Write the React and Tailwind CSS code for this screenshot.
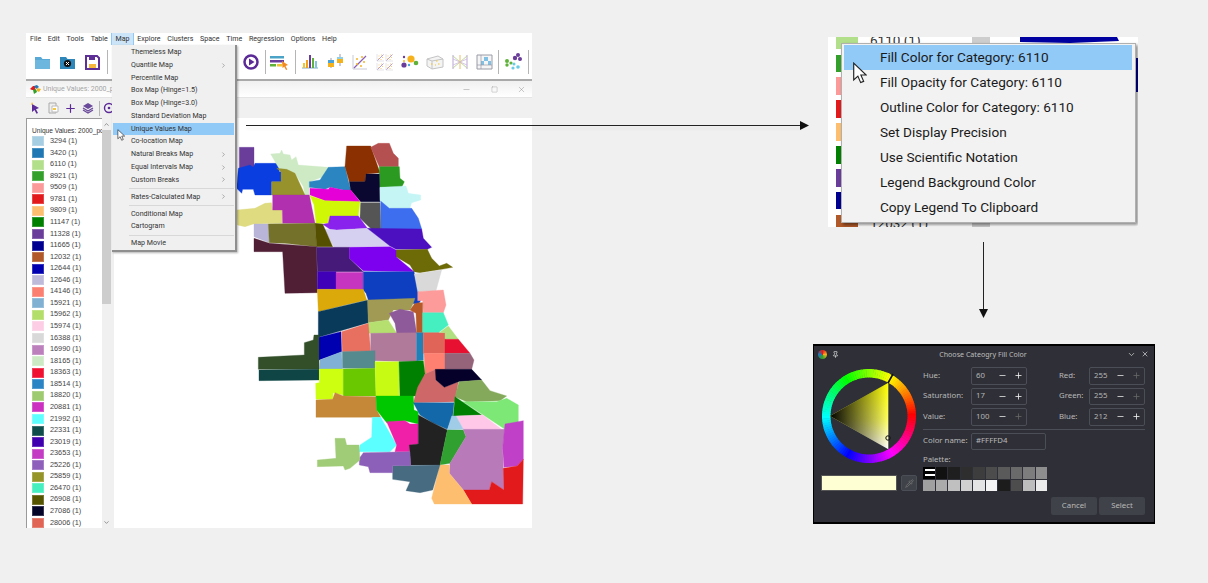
import React from "react";
import { Minus, Plus, Square, X, ChevronDown, ChevronUp, ChevronRight, Pipette, Pin } from "lucide-react";

const menuBar = ["File", "Edit", "Tools", "Table", "Map", "Explore", "Clusters", "Space", "Time", "Regression", "Options", "Help"];
const legend = [
  ["3294", "#a6cee3"], ["3420", "#1f78b4"], ["6110", "#b2df8a"], ["8921", "#33a02c"], ["9509", "#fb9a99"], ["9781", "#e31a1c"],
  ["9809", "#fdbf6f"], ["11147", "#008000"], ["11328", "#6a3d9a"], ["11665", "#000090"], ["12032", "#b15928"], ["12644", "#0000b0"],
  ["12646", "#bebada"], ["14146", "#fb8072"], ["15921", "#80b1d3"], ["15962", "#b3de69"], ["15974", "#fccde5"], ["16388", "#d9d9d9"],
  ["16990", "#bc80bd"], ["18165", "#ccebc5"], ["18363", "#f01030"], ["18514", "#2b85c4"], ["18820", "#9fcb70"], ["20881", "#cc30c0"],
  ["21992", "#5effff"], ["22331", "#0f4c4c"], ["23019", "#4000b0"], ["23653", "#c43cc4"], ["25226", "#8f60bb"], ["25859", "#949428"],
  ["26470", "#45efc0"], ["26908", "#555500"], ["27086", "#05052a"], ["28006", "#e06555"],
];
const popup = [
  ["Themeless Map"], ["Quantile Map", 1], ["Percentile Map"], ["Box Map (Hinge=1.5)"], ["Box Map (Hinge=3.0)"], ["Standard Deviation Map"],
  ["Unique Values Map", 0, 1], ["Co-location Map"], ["Natural Breaks Map", 1], ["Equal Intervals Map", 1], ["Custom Breaks", 1], "sep",
  ["Rates-Calculated Map", 1], "sep", ["Conditional Map"], ["Cartogram"], "sep", ["Map Movie"],
];
const north = [
  ["#6a3d9a", "28,52 72,52 72,118 28,114"],
  ["#0a3ee0", "25,115 60,105 70,112 75,100 145,100 148,125 153,125 153,155 125,155 125,195 75,195 70,178 38,178 35,190 20,175"],
  ["#cdeac5", "122,72 150,70 155,60 160,72 180,75 185,90 198,80 205,105 295,112 280,140 238,155 238,195 225,195 220,170 195,130 170,135 145,112"],
  ["#97922b", "140,115 170,118 195,130 225,195 125,195 125,155 153,155 153,125"],
  ["#2b85c1", "295,112 345,110 362,180 340,180 300,172 285,178 238,172 238,155 270,150"],
  ["#8b3000", "350,48 422,48 450,128 408,132 405,155 358,155 345,110"],
  ["#b55050", "422,52 445,40 478,40 490,70 505,85 505,110 448,110"],
  ["#2a9a20", "448,110 508,110 510,145 523,155 515,172 448,172"],
  ["#0a0830", "358,155 405,155 408,132 448,132 450,215 392,215 362,180"],
  ["#c5f5f5", "450,172 528,168 535,190 572,195 572,210 545,218 540,235 480,235 450,212"],
  ["#3d6ef0", "452,213 478,235 545,235 565,265 575,297 452,298"],
  ["#555555", "392,218 450,218 452,298 425,298 390,265"],
  ["#e600d8", "240,175 295,178 300,172 340,180 362,180 390,215 285,212 240,195"],
  ["#d0f806", "240,197 285,212 390,215 385,258 300,258 295,280 258,280 252,225"],
  ["#8a22ee", "300,258 385,258 412,295 320,300 300,298 278,283 295,280"],
  ["#d5d0f0", "282,297 320,300 412,295 480,348 312,352"],
  ["#4c10c0", "412,295 575,297 580,325 605,352 592,358 498,358 480,348"],
  ["#6d6a08", "498,360 592,358 605,385 628,408 650,400 668,412 635,418 570,428 552,425 540,405 498,380"],
  ["#dedb80", "20,240 75,235 105,220 125,218 128,240 157,240 157,280 70,282 45,290 22,285"],
  ["#b030b0", "128,195 238,195 255,280 158,280 157,240 128,240"],
  ["#b8b5d8", "72,282 115,282 118,338 72,320"],
  ["#74722a", "115,282 255,280 260,350 165,340 118,338"],
  ["#555000", "255,280 278,282 308,350 260,350"],
  ["#501f35", "72,325 118,340 260,350 262,488 165,490 158,365 72,365"],
  ["#451a78", "260,352 358,352 358,385 400,425 262,425"],
  ["#7d00ee", "358,352 480,350 498,360 498,380 552,425 400,422 358,385"],
  ["#4000b8", "262,425 318,425 318,478 262,478"],
  ["#c535c0", "318,427 400,427 400,480 318,480"],
  ["#0e3fc0", "400,425 552,425 572,512 565,522 415,510 408,490 400,480"],
  ["#d9d9d9", "553,432 635,420 618,482 563,485"],
  ["#fd9a9a", "563,485 640,480 648,525 640,548 580,548 578,512 563,512"],
  ["#dba90a", "262,478 400,478 410,510 345,525 265,545"],
];
const south = [
  ["#0a3a5a", "205,35 355,0 355,68 205,112"],
  ["#a09a55", "352,0 495,-5 490,10 480,30 430,30 415,60 355,68"],
  ["#b5e070", "355,68 415,60 440,100 355,100"],
  ["#8f5a9a", "418,40 450,28 490,35 500,100 440,100 435,70"],
  ["#b55a28", "480,30 493,12 505,8 518,8 518,98 500,98 498,40"],
  ["#45efc0", "518,38 580,38 595,75 565,98 518,98"],
  ["#0000b0", "207,112 273,95 275,155 207,180"],
  ["#e87060", "275,95 355,70 362,155 277,155"],
  ["#b07a9a", "362,100 500,98 500,185 375,182 362,155"],
  ["#2080b8", "500,98 520,98 520,180 500,183"],
  ["#e06558", "520,98 585,98 585,160 520,160"],
  ["#b0e080", "568,98 595,78 625,118 585,118 585,98"],
  ["#e81030", "585,118 625,118 660,160 585,160"],
  ["#ff8070", "522,160 585,160 585,222 558,208 525,222"],
  ["#96647a", "585,160 660,160 672,180 665,208 585,208"],
  ["#558a8f", "277,155 375,152 375,205 277,205"],
  ["#80b0d5", "210,180 275,155 277,207 208,207"],
  ["#324f2a", "25,172 163,165 163,128 190,120 192,105 207,105 207,208 25,208"],
  ["#0f4545", "27,210 207,208 207,240 27,242"],
  ["#ccff10", "208,207 280,207 280,285 250,278 248,298 198,298 197,250 208,248"],
  ["#6ac800", "280,207 375,205 378,288 280,288"],
  ["#c8fb14", "375,185 447,185 448,288 378,288"],
  ["#008000", "447,185 520,182 525,222 502,288 450,288"],
  ["#ce6868", "525,222 558,208 558,240 583,262 625,245 615,305 490,308 503,262"],
  ["#05002a", "556,208 665,208 695,240 625,245 583,262 558,240"],
  ["#84a95a", "627,245 695,240 720,272 770,288 750,302 650,305 615,290"],
  ["#c48838", "198,300 248,298 255,278 280,288 378,290 380,330 392,352 198,352"],
  ["#00c800", "378,288 490,288 492,330 505,335 505,372 465,362 410,368 380,330"],
  ["#1268a8", "490,308 612,308 608,348 592,388 548,368 510,345"],
  ["#7de875", "640,305 740,305 770,295 805,315 805,365 765,388 700,345"],
  ["#008000", "615,290 695,345 610,348"],
  ["#ffc8e8", "618,348 698,345 755,388 640,388"],
  ["#a0cce8", "605,348 618,348 640,388 592,390"],
  ["#5bffff", "367,352 392,352 440,435 420,455 327,455 330,435 365,412"],
  ["#f020a8", "410,365 465,362 480,372 505,372 505,432 480,435 478,455 435,455 440,435"],
  ["#222222", "505,345 548,368 592,390 570,495 482,495 478,435 505,432"],
  ["#30a030", "592,390 640,390 648,410 600,490 570,495"],
  ["#b87ab8", "640,388 765,388 758,445 760,505 762,570 725,545 718,570 640,570 598,520 600,490 648,410"],
  ["#c040c8", "765,372 820,362 820,478 802,498 762,502 758,445"],
  ["#e31a1c", "802,498 820,478 818,612 665,612 640,570 718,570 725,545 762,570 760,505"],
  ["#fdbf6f", "570,495 598,495 598,520 640,570 665,612 553,612 545,595"],
  ["#476b80", "428,497 570,495 548,570 510,578 468,572 480,545 428,538"],
  ["#8c60b8", "328,475 340,458 480,455 482,497 428,497 428,518 360,518 355,500 328,495"],
  ["#a0cc78", "255,415 285,415 290,435 327,435 330,480 300,505 285,510 280,498 202,500 202,480 258,475"],
];

function Tool({ children }) {
  return (
    <svg width="24" height="20" viewBox="0 0 24 20" className="shrink-0 mr-[1px]">
      {children}
    </svg>
  );
}
const Sep = ({ className = "" }) => <div className={"w-px h-[24px] bg-[#b5b5b5] shrink-0 " + className} />;

function Dots({ x = 0, y = 0, s = 1 }) {
  return (
    <g transform={`translate(${x} ${y}) scale(${s})`}>
      <path d="M2 2V16H16" fill="none" stroke="#c9c9d6" strokeWidth="1" />
      <path d="M3 15L15 3" stroke="#8a5fb5" strokeWidth="1.2" />
      <path d="M5 6h2M10 4h2M12 9h2M5 11h2M9 13h2" stroke="#f5b52a" strokeWidth="1.3" />
    </g>
  );
}

function Toolbar() {
  return (
    <div className="flex items-center h-[34px] pl-[4px] bg-white">
      <Tool>
        <path d="M5 5h6l1.5 2H20v10H5z" fill="#58a9d6" />
        <path d="M5 8h15v9H5z" fill="#6db6de" />
      </Tool>
      <Tool>
        <path d="M5 5h6l1.5 2H20v10H5z" fill="#2f86b8" />
        <circle cx="12.5" cy="11.5" r="3.6" fill="#111" />
        <path d="M11 10l3 3M14 10l-3 3" stroke="#fff" strokeWidth="1" />
      </Tool>
      <Tool>
        <path d="M6 4h11l2 2v11H6z" fill="#fff" stroke="#5f2f98" strokeWidth="2" />
        <path d="M9 5h6v3H9z" fill="#5f2f98" />
        <path d="M9 12h7v4H9z" fill="#f6b73c" />
      </Tool>
      <Sep className="ml-[2px]" />
      <div className="w-[131px] shrink-0" />
      <Tool>
        <circle cx="12" cy="10" r="6.5" fill="#fff" stroke="#5b2a97" strokeWidth="2.5" />
        <path d="M10 6.5L15.5 10L10 13.5z" fill="#5b2a97" />
      </Tool>
      <Sep className="ml-[1px] mr-[1px]" />
      <Tool>
        <path d="M3 4h14v2.5H3z" fill="#4ba3c7" />
        <path d="M3 8h14v2.5H3z" fill="#6a3d9a" />
        <path d="M3 12h6v2.5H3z" fill="#5fb13a" />
        <path d="M10 12h5v2.5h-5z" fill="#f2c530" />
        <path d="M15 9l6 4-2.5 1 1.8 3.5-1.3.6-1.7-3.4L15.5 16z" fill="#f28a1e" />
      </Tool>
      <Sep className="ml-[3px]" />
      <div className="w-[2px] shrink-0" />
      <Tool>
        <path d="M4 16h16" stroke="#aac7d8" strokeWidth="1.5" />
        <path d="M5 11h2v5H5z" fill="#f2c530" />
        <path d="M8 8h2v8H8z" fill="#f2a11c" />
        <path d="M11 3h2v13h-2z" fill="#6a3d9a" />
        <path d="M14 6h2v10h-2z" fill="#5fb13a" />
        <path d="M17 9h2v7h-2z" fill="#7fc6de" />
      </Tool>
      <Tool>
        <path d="M8 6v10M17 2v12" stroke="#9b9bb0" strokeWidth="1" />
        <path d="M5 8h6v3H5z" fill="#4ba3d7" />
        <path d="M5 11h6v4H5z" fill="#f6b21c" />
        <path d="M14 5h6v6h-6z" fill="#f6b21c" />
        <path d="M14 5h6v2h-6z" fill="#8fd0e8" />
      </Tool>
      <Tool><Dots x={3} y={1} /></Tool>
      <Tool>
        <Dots x={3} y={1} s={0.5} /><Dots x={12} y={1} s={0.5} /><Dots x={3} y={10} s={0.5} /><Dots x={12} y={10} s={0.5} />
      </Tool>
      <Tool>
        <circle cx="6" cy="13" r="2.6" fill="#6a3d9a" />
        <circle cx="13" cy="7" r="3.6" fill="#f6b21c" />
        <circle cx="18" cy="11" r="2.3" fill="#5fb13a" />
        <circle cx="11" cy="13" r="1.2" fill="#4ba3d7" />
        <circle cx="6" cy="5" r="1.2" fill="#6a3d9a" />
        <circle cx="6" cy="9" r="1" fill="#f6b21c" />
      </Tool>
      <Tool>
        <path d="M4 7l11-3 5 3v8l-11 2-5-3z" fill="#f4f4f4" stroke="#c4c4c4" />
        <path d="M4 7l5 2v8M9 9l11-2" fill="none" stroke="#c4c4c4" />
        <path d="M8 12h1.5M13 9h1.5M15 12h1.5M12 13h1" stroke="#f2c530" strokeWidth="1" />
      </Tool>
      <Tool>
        <path d="M5 3v14M19 3v14" stroke="#b9a7d6" strokeWidth="1" />
        <path d="M5 4L12 10 5 16M19 4L12 10 19 16" fill="none" stroke="#c3d69a" strokeWidth="1" />
        <path d="M5 7L19 13M5 13L19 7" stroke="#cdb9e4" strokeWidth=".8" />
        <path d="M12 3v14" stroke="#e8c06a" strokeWidth="1" />
      </Tool>
      <Tool>
        <path d="M4 3h15v14H4z" fill="#f5f5f5" stroke="#9a9aa8" />
        <path d="M11 5h4v4h-4zM15 9h3v4h-3zM8 9h3v4H8z" fill="#7fc0e4" />
        <path d="M8 3v14M4 13h15" stroke="#9a9aa8" strokeWidth=".7" />
      </Tool>
      <Sep />
      <div className="w-[2px] shrink-0" />
      <Tool>
        <circle cx="6" cy="9" r="2" fill="#5fb13a" />
        <circle cx="6" cy="13" r="1.7" fill="#5fb13a" /><circle cx="10" cy="11" r="1.6" fill="#5fb13a" />
        <circle cx="14" cy="6" r="2.2" fill="#6a3d9a" /><circle cx="17" cy="3" r="2" fill="#6a3d9a" /><circle cx="19" cy="7" r="2" fill="#6a3d9a" />
        <circle cx="13" cy="12" r="1.5" fill="#69cbe8" /><circle cx="17" cy="15" r="1.8" fill="#69cbe8" /><circle cx="12" cy="16" r="1.6" fill="#69cbe8" />
      </Tool>
      <Sep className="ml-[2px]" />
    </div>
  );
}

function MenuPopup() {
  return (
    <div className="absolute left-[86px] top-[12px] w-[125px] bg-[#f0f0f0] border-r-2 border-b-2 border-[#8f8f8f] pt-[1px] shadow-[1px_1px_2px_rgba(0,0,0,0.3)] text-[#333] text-[7.1px] font-['Roboto',sans-serif]">
      {popup.map((it, i) =>
        it === "sep" ? (
          <div key={i} className="h-[4.25px] flex items-center pl-[17px] pr-[1px]">
            <div className="h-px w-full bg-[#d8d8d8]" />
          </div>
        ) : (
          <div key={i} className={"h-[12.75px] flex items-center pl-[18px] pr-[7px] mx-[1px] justify-between " + (it[2] ? "bg-[#91c9f7]" : "")}>
            <span className="whitespace-nowrap">{it[0]}</span>
            {it[1] ? <ChevronRight size={7} strokeWidth={1.5} className="text-[#555]" /> : null}
          </div>
        )
      )}
    </div>
  );
}

function Cursor({ className, w, h }) {
  return (
    <svg width={w} height={h} viewBox="0 0 12 19" className={className}>
      <path d="M1 1V15.5L4.6 12.2 7 17.8 9.6 16.7 7.2 11.2H11.8z" fill="#fff" stroke="#222" strokeWidth="1" />
    </svg>
  );
}

function LeftWindow() {
  return (
    <div className="relative w-[506px] h-[495px] flex flex-col shrink-0 font-['Roboto',sans-serif]">
      <div className="h-[12px] bg-white flex items-center pl-[0.7px] text-[7.1px] text-[#333]">
        {menuBar.map((m) => (
          <div key={m} className={"h-full flex items-center px-[3.35px] " + (m === "Map" ? "bg-[#cce4f7] border-x border-[#90c8f6]" : "")}>
            {m}
          </div>
        ))}
      </div>
      <div className="border-b-2 border-[#a9a9a9]">
        <Toolbar />
      </div>
      <div className="h-[17px] bg-gradient-to-b from-[#f0f0f0] to-white flex items-center pl-[4px] pr-[6px] text-[#a5a5a5] text-[7px] border-b border-[#e4e4e4]">
        <svg width="11" height="9" viewBox="0 0 11 9" className="mr-[2px]">
          <path d="M0 4l3-3h2v4H2z" fill="#e31a1c" /><path d="M4 1l3-1 2 2-3 2z" fill="#1f78b4" /><path d="M3 5l3-1 1 3-3 2z" fill="#33a02c" /><path d="M7 3l4 1-2 3-2-1z" fill="#f6b21c" />
        </svg>
        <span>Unique Values: 2000_po</span>
        <div className="flex-1" />
        <Minus size={9} className="text-[#777] mr-[20px]" strokeWidth={1} />
        <Square size={7} className="text-[#777] mr-[19px]" strokeWidth={1} />
        <X size={9} className="text-[#777]" strokeWidth={1} />
      </div>
      <div className="h-[20px] bg-[#f0f0f0] flex items-center pl-[2px]">
        <svg width="12" height="12" viewBox="0 0 12 12" className="ml-[1px]"><path d="M3 2l7 4-3 1.2L9 11l-1.5.8L5.5 8 3 10z" fill="#5b2a97" /><path d="M3 0l1 2-2 1z" fill="#f6b21c" /></svg>
        <svg width="12" height="12" viewBox="0 0 12 12" className="ml-[6px]"><path d="M2 1h7v10H2z" fill="#eee" stroke="#aaa" /><path d="M5 4h6v6H5z" fill="#fff" stroke="#bbb" /><path d="M6 6h3v2H6z" fill="#f6c63c" /></svg>
        <Plus size={13} className="text-[#5b2a97] ml-[5px]" strokeWidth={2.2} />
        <svg width="12" height="12" viewBox="0 0 12 12" className="ml-[5px]"><path d="M6 1l5 3-5 3-5-3z" fill="#6a4a9a" /><path d="M1 6l5 3 5-3M1 8l5 3 5-3" fill="none" stroke="#6a4a9a" strokeWidth="1.3" /></svg>
        <div className="w-px h-[15px] bg-[#b5b5b5] ml-[5px]" />
        <svg width="12" height="12" viewBox="0 0 12 12" className="ml-[3px]"><circle cx="6" cy="6" r="4.5" fill="none" stroke="#5b2a97" strokeWidth="1.4" /><circle cx="6" cy="6" r="1.3" fill="#5b2a97" /></svg>
      </div>
      <div className="flex h-[410px]">
        <div className="w-[76px] bg-white border-l border-t border-[#9a9a9a] overflow-hidden font-['Liberation_Sans',sans-serif] text-[7.3px] text-[#444]">
          <div className="h-[16.7px] pl-[5px] pt-[8px] leading-[8px] whitespace-nowrap text-[#333] text-[6.6px]">Unique Values: 2000_po</div>
          {legend.map(([k, c]) => (
            <div key={k} className="h-[11.57px] flex items-center pl-[5px] whitespace-nowrap">
              <div className="w-[12px] h-[10px] shrink-0 mr-[6px] border border-white/20" style={{ backgroundColor: c }} />
              {k} (1)
            </div>
          ))}
        </div>
        <div className="w-[9px] bg-[#f0f0f0] flex flex-col items-center justify-between">
          <div className="w-full h-[186px] flex flex-col items-center bg-[#cdcdcd]">
            <div className="w-full h-[12px] bg-[#f0f0f0] flex items-center justify-center"><ChevronUp size={7} className="text-[#555]" strokeWidth={2} /></div>
          </div>
          <ChevronDown size={7} className="text-[#555] mb-[2px]" strokeWidth={2} />
        </div>
        <div className="w-[3px] bg-[#f0f0f0]" />
        <div className="flex-1 bg-white">
          <svg width="418" height="410" viewBox="114 118 418 410" className="block">
            <g transform="translate(230 130) scale(0.33333)">
              {north.map(([c, p], i) => <polygon key={i} points={p} fill={c} stroke={c} strokeWidth="1" />)}
            </g>
            <g transform="translate(250 300) scale(0.33333)">
              {south.map(([c, p], i) => <polygon key={i} points={p} fill={c} stroke={c} strokeWidth="1" />)}
            </g>
          </svg>
        </div>
      </div>
      <MenuPopup />
      <Cursor className="absolute left-[91px] top-[96px]" w={8} h={12} />
    </div>
  );
}

const ctxItems = [
  "Fill Color for Category: 6110",
  "Fill Opacity for Category: 6110",
  "Outline Color for Category: 6110",
  "Set Display Precision",
  "Use Scientific Notation",
  "Legend Background Color",
  "Copy Legend To Clipboard",
];
const ctxSwatches = [["6110", "#b2df8a"], ["8921", "#33a02c"], ["9509", "#fb9a99"], ["9781", "#e31a1c"], ["9809", "#fdbf6f"], ["11147", "#008000"], ["11328", "#6a3d9a"], ["11665", "#000090"], ["12032", "#b15928"]];

function ContextCrop() {
  return (
    <div className="relative w-[310px] h-[190px] ml-[15px] mt-[4px] bg-white overflow-hidden flex font-['Roboto',sans-serif]">
      <div className="w-[144px] shrink-0 pl-[8px] -mt-[8px]">
        {ctxSwatches.map(([k, c]) => (
          <div key={k} className="h-[22.9px] flex items-center text-[#333] text-[13.5px]">
            <div className="w-[22px] h-[17.5px] shrink-0 mr-[12px]" style={{ backgroundColor: c }} />
            {k} (1)
          </div>
        ))}
      </div>
      <div className="w-[18px] bg-[#cdcdcd] shrink-0" />
      <div className="flex-1">
        <svg width="148" height="190" viewBox="990 37 148 190" className="block">
          <path d="M1020 37H1117L1119 41 1070 43 1020 42z" fill="#0000a0" />
          <path d="M1134 58H1138V92H1134z" fill="#0000a0" />
        </svg>
      </div>
      <div className="absolute left-[13px] top-[6px] w-[295px] h-[180px] bg-[#f2f2f2] border border-[#b0b0b0] shadow-[2px_2px_3px_rgba(0,0,0,0.45)] pt-[1px] text-[13.6px] text-[#1a1a1a]">
        {ctxItems.map((t, i) => (
          <div key={t} className={"h-[25px] flex items-center pl-[36px] ml-[2px] mr-[3px] " + (i === 0 ? "bg-[#91c9f7]" : "")}>
            {t}
          </div>
        ))}
      </div>
      <Cursor className="absolute left-[24px] top-[25px]" w={15} h={22} />
    </div>
  );
}

function Wheel() {
  const segs = [];
  for (let i = 0; i < 120; i++) {
    const a0 = (i * 3 * Math.PI) / 180;
    const a1 = ((i + 1.2) * 3 * Math.PI) / 180;
    const R = 47, r = 38.5;
    const p = (rad, a) => `${(48 + rad * Math.cos(a)).toFixed(2)} ${(48 - rad * Math.sin(a)).toFixed(2)}`;
    segs.push(
      <path key={i} d={`M${p(R, a0)}A${R} ${R} 0 0 0 ${p(R, a1)}L${p(r, a1)}A${r} ${r} 0 0 1 ${p(r, a0)}Z`} fill={`hsl(${i * 3} 100% 50%)`} />
    );
  }
  return (
    <svg width="96" height="96" viewBox="0 0 96 96" className="block shrink-0">
      {segs}
      <defs>
        <linearGradient id="yw" x1="0" y1="0" x2="0" y2="1">
          <stop offset="0" stopColor="#ffff00" />
          <stop offset="0.55" stopColor="#ffff60" />
          <stop offset="1" stopColor="#ffffff" />
        </linearGradient>
        <linearGradient id="bk" x1="0" y1="0" x2="1" y2="0">
          <stop offset="0" stopColor="#000" stopOpacity="1" />
          <stop offset="1" stopColor="#000" stopOpacity="0" />
        </linearGradient>
      </defs>
      <polygon points="67.3,14.7 9,48 67.3,81.3" fill="url(#yw)" />
      <polygon points="67.3,14.7 9,48 67.3,81.3" fill="url(#bk)" />
      <path d="M67 15L72 6" stroke="#111" strokeWidth="1.6" />
      <circle cx="67" cy="70" r="2.2" fill="none" stroke="#111" strokeWidth="1" />
    </svg>
  );
}

function Spin({ v, minus = true, plus = true }) {
  return (
    <div className="w-[56px] h-[17.5px] border border-[#4b4e56] rounded-[2px] flex items-center pl-[4px] text-[#b5b5b5]">
      <span className="flex-1">{v}</span>
      <Minus size={9} strokeWidth={2.2} className={minus ? "text-[#e0e0e0] mr-[7px]" : "text-[#666] mr-[7px]"} />
      <Plus size={9} strokeWidth={2.2} className={plus ? "text-[#f0f0f0] mr-[3px]" : "text-[#666] mr-[3px]"} />
    </div>
  );
}

const pal1 = ["#000", "#111111", "#1f1f1f", "#2e2e2e", "#3d3d3d", "#4c4c4c", "#5a5a5a", "#6a6a6a", "#7d7d7d", "#8e8e8e"];
const pal2 = ["#a0a0a0", "#ababab", "#c0c0c0", "#d0d0d0", "#e4e4e4", "#f4f4f4", "#1c1c1c", "#4d4d4d", "#bdbdbd", "#ebebeb"];

function Dialog() {
  const rows = [
    ["Hue:", "60", true, true, "Red:", "255", true, false],
    ["Saturation:", "17", true, true, "Green:", "255", true, false],
    ["Value:", "100", true, false, "Blue:", "212", true, true],
  ];
  return (
    <div className="w-[342px] h-[180px] mt-[117px] bg-[#2f3037] border-y-2 border-x border-black font-['Noto_Sans',sans-serif] text-[7.8px] text-[#b8b8b8] flex flex-col">
      <div className="h-[16px] flex items-center pl-[4px] pr-[5px] shrink-0">
        <div className="w-[9px] h-[9px] rounded-full bg-[conic-gradient(#e31a1c,#f6b21c,#33a02c,#1f78b4,#e31a1c)]" />
        <Pin size={7} className="text-white ml-[5px]" />
        <div className="flex-1 text-center text-[#bdbdbd] text-[7.1px]">Choose Cateogry Fill Color</div>
        <ChevronDown size={9} className="text-[#cfcfcf] mr-[5px]" />
        <X size={8} className="text-[#e0e0e0]" />
      </div>
      <div className="flex pl-[7px]">
        <div className="w-[102px] shrink-0 pt-[6px]">
          <Wheel />
          <div className="flex mt-[11px] gap-[4px]">
            <div className="w-[76px] h-[16px] bg-[#ffffd4] border border-[#555]" />
            <div className="w-[16px] h-[16px] bg-[#3f4248] border border-[#4b4e56] flex items-center justify-center rounded-[2px]">
              <Pipette size={9} className="text-[#777]" />
            </div>
          </div>
        </div>
        <div className="pt-[5px] w-[222px]">
          <div className="flex flex-col gap-[3px]">
            {rows.map((r) => (
              <div key={r[0]} className="flex items-center">
                <div className="w-[48px]">{r[0]}</div>
                <Spin v={r[1]} minus={r[2]} plus={r[3]} />
                <div className="w-[30px] ml-[32px]">{r[4]}</div>
                <Spin v={r[5]} minus={r[6]} plus={r[7]} />
              </div>
            ))}
          </div>
          <div className="h-px bg-[#4b4e56] mt-[3.5px]" />
          <div className="flex items-center mt-[2.5px]">
            <div className="w-[48px]">Color name:</div>
            <div className="w-[75px] h-[17.5px] border border-[#4b4e56] rounded-[2px] flex items-center pl-[4px]">#FFFFD4</div>
          </div>
          <div className="mt-[3px] h-[12px] leading-[12px]">Palette:</div>
          <div className="grid grid-cols-[repeat(10,11.5px)] gap-[1px] mt-[2px]">
            {pal1.map((c, i) => (
              <div key={"a" + i} className="h-[11.5px] relative" style={{ backgroundColor: c }}>
                {i === 0 ? <div className="absolute left-[2px] right-0 top-[2px] h-[7px] border-y-2 border-white" /> : null}
              </div>
            ))}
            {pal2.map((c, i) => <div key={"b" + i} className="h-[11.5px]" style={{ backgroundColor: c }} />)}
          </div>
          <div className="flex justify-end gap-[2px] mt-[6px]">
            <div className="w-[46px] h-[18px] rounded-[2px] bg-[#3f4248] flex items-center justify-center">Cancel</div>
            <div className="w-[46px] h-[18px] rounded-[2px] bg-[#3f4248] flex items-center justify-center">Select</div>
          </div>
        </div>
      </div>
    </div>
  );
}

export default function App() {
  return (
    <div className="relative w-[1208px] h-[583px] bg-[#f0f0f0] overflow-hidden flex pt-[33px] pl-[26px]">
      <LeftWindow />
      <div className="ml-[281px] w-[342px] flex flex-col shrink-0">
        <ContextCrop />
        <Dialog />
      </div>
      <div className="absolute left-[246px] top-[124.5px] w-[556px] h-px bg-[#222] shadow-[0_3px_3px_rgba(0,0,0,0.08)]" />
      <svg width="9" height="9" viewBox="0 0 9 9" className="absolute left-[800px] top-[120.5px]"><path d="M0 0L9 4.5 0 9z" fill="#111" /></svg>
      <div className="absolute left-[983px] top-[242px] w-px h-[70px] bg-[#222]" />
      <svg width="9" height="9" viewBox="0 0 9 9" className="absolute left-[979px] top-[309px]"><path d="M0 0H9L4.5 9z" fill="#111" /></svg>
    </div>
  );
}
